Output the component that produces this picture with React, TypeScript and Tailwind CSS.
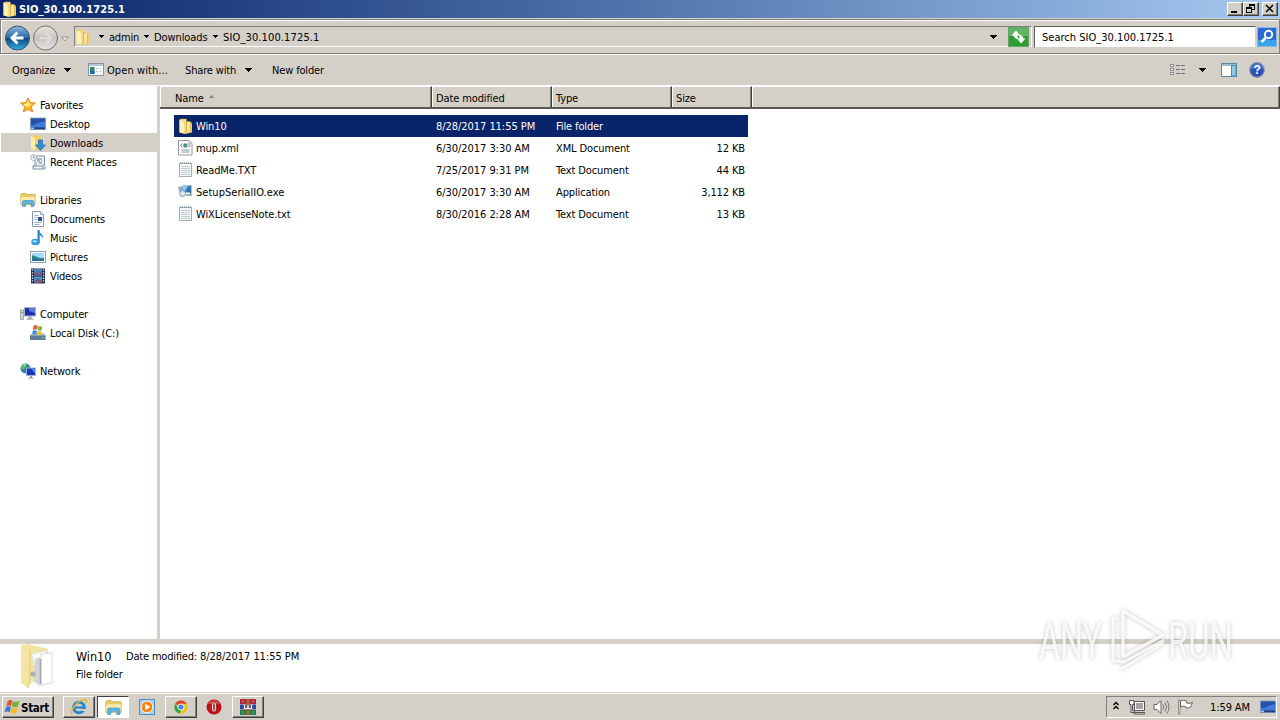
import { ReactNode } from "react";
import clsx from "clsx";

type IconProps = { children: ReactNode; size?: number; box?: string };

function Icon({ children, size = 16, box = "0 0 16 16" }: IconProps) {
  return (
    <svg width={size} height={size} viewBox={box} fill="none" className="shrink-0">
      {children}
    </svg>
  );
}

const FolderIcon = () => (
  <Icon>
    <path d="M1.500 1.500L5 .5l2 1V3l5.500.5 1.500 2v9l-7 1.500-5.500-1.500z" fill="#eccb62" />
    <path d="M1.500 1.500L6 3v12.500l-4.500-1.300z" fill="#fcf0b4" />
    <path d="M5.500 1L8.500.8V13l-2.500 2.500V3z" fill="#f3dc85" />
    <path d="M8.500 4.500l3.500-.3V14l-3.500 1z" fill="#f8e79e" />
    <path d="M8.500 3v11" stroke="#cfa53a" strokeWidth=".8" />
    <path d="M12.300 5v9.500" stroke="#d9b349" strokeWidth=".6" />
  </Icon>
);

const StarIcon = () => (
  <Icon>
    <path d="M8 .8l2.100 4.800 5.200.5-3.900 3.500 1.200 5.300L8 12.200l-4.600 2.700 1.200-5.300L.7 6.100l5.200-.5z" fill="#ffb92a" stroke="#e8821a" strokeWidth="1" />
    <path d="M8 3l1.400 3.600L12 7 6 10 3.400 7l3-.5z" fill="#ffe98a" />
  </Icon>
);

const DesktopIcon = () => (
  <Icon>
    <rect x=".5" y="2" width="15" height="11.500" fill="#2a57b4" stroke="#7c9ac8" strokeWidth=".8" />
    <path d="M1 3h14v3C10 5 6 9 1 9z" fill="#2850a8" />
    <path d="M1 9.500c5 0 7-4 14-4v6H1z" fill="#3f7bd9" />
    <rect x="1" y="11.500" width="14" height="1.700" fill="#26406f" />
    <rect x="1" y="11.500" width="3" height="1.700" fill="#8fc6f5" />
  </Icon>
);

const DownloadsIcon = () => (
  <Icon>
    <path d="M1 1l4-1 6 1v13l-6 1-4-1z" fill="#ecd06a" />
    <path d="M1 1l4 2v12l-4-1z" fill="#faedae" />
    <path d="M8.500 5h4v5h3l-5 5.500-5-5.500h3z" fill="#2f8ed8" stroke="#1a66ad" strokeWidth=".7" />
  </Icon>
);

const RecentIcon = () => (
  <Icon>
    <path d="M5 2h9.500v9H13v4H3v-3h2z" fill="#eef2f6" stroke="#7d93aa" />
    <path d="M3 12h10M13 15h2v-3" stroke="#7d93aa" />
    <path d="M7 5h5M7 7h3M9 9h3M6 10h1M11 7h1" stroke="#5e7890" />
    <circle cx="3.600" cy="3.600" r="3" fill="#f4f7fa" stroke="#8ba0b2" strokeWidth=".8" />
    <path d="M3.600 1.800v2h1.500" stroke="#476887" strokeWidth=".7" />
  </Icon>
);

const LibrariesIcon = ({ size }: { size?: number }) => (
  <Icon size={size}>
    <path d="M.8 2.500l1-1h4l1 1h8.400v10H.8z" fill="#e9cc62" stroke="#c9a43b" strokeWidth=".7" />
    <path d="M1.300 5h13.500v7H1.300z" fill="#f9ecae" />
    <path d="M2.500 14.500V10Q2.500 8.500 4 8.500h8.500q1.500 0 1.500 1.500v4.500h-3v-3H5.500v3z" fill="#5cb5e6" stroke="#3488c0" strokeWidth=".6" />
  </Icon>
);

const DocumentIcon = () => (
  <Icon>
    <path d="M2.500.5h8l3 3v12h-11z" fill="#fbfdff" stroke="#8199b8" />
    <path d="M10.500.5v3h3" fill="#d6e3f1" stroke="#8199b8" strokeWidth=".7" />
    <path d="M4.500 4.500h4M4.500 6.500h3M4.500 8.500h3M4.500 11.500h7M4.500 13.500h5" stroke="#9baec5" />
    <rect x="8" y="6" width="4" height="4" fill="#2c4f92" />
  </Icon>
);

const MusicIcon = () => (
  <Icon>
    <path d="M8 0c1 3 5.500 3.500 5.200 9-1-2.500-2.200-3.200-3.700-3.500z" fill="#2f93d4" />
    <path d="M7.500 0h2.200v13H7.500z" fill="#2b83c8" />
    <ellipse cx="5.500" cy="12" rx="4.200" ry="3.300" fill="#2e9ade" />
    <ellipse cx="4.800" cy="11.200" rx="2" ry="1.200" fill="#9bd8f7" />
  </Icon>
);

const PicturesIcon = () => (
  <Icon>
    <rect x=".5" y="2.500" width="15" height="11" fill="#fff" stroke="#8fa0ad" />
    <rect x="2" y="4" width="12" height="8" fill="#a5dcf5" />
    <path d="M2 6.500c4 0 5 3 12 2.500V12H2z" fill="#2e7f86" />
    <path d="M2 10c4 1 8 1 12 0v2H2z" fill="#276ca8" />
  </Icon>
);

const VideosIcon = () => (
  <Icon>
    <rect x="1" y=".5" width="14" height="15" fill="#223240" />
    <rect x="4" y="1" width="8" height="6.500" fill="#3f82c8" />
    <rect x="4" y="8.500" width="8" height="6.500" fill="#4f95d6" />
    <path d="M4 5l3-2 2 2 3-1v3.500H4zM4 13l4-3 4 3v2H4z" fill="#7b5a86" />
    <path d="M2.500 1.500v14M13.500 1.500v14" stroke="#dfe9f1" strokeWidth="1.300" strokeDasharray="1.300 1.400" />
  </Icon>
);

const ComputerIcon = () => (
  <Icon>
    <rect x=".5" y="4" width="3" height="9.500" fill="#cfd6cf" stroke="#83908a" strokeWidth=".7" />
    <rect x="1.200" y="6" width="1.500" height="1" fill="#49aa40" />
    <rect x="4.500" y="1.500" width="11" height="8.500" fill="#1d2fae" stroke="#a9b3cc" />
    <path d="M9 2h6v5L9 5z" fill="#5d79e0" />
    <path d="M8.500 10.500h3v2h2v1.200h-7v-1.200h2z" fill="#a0a9b5" />
  </Icon>
);

const DiskIcon = () => (
  <Icon>
    <path d="M0 10l2.500-2H13l2.500 2v5H0z" fill="#a9bccb" />
    <path d="M0 10.500h15.500V15H0z" fill="#5b7d99" />
    <rect x="11.500" y="12" width="3" height="1.300" fill="#63d65a" />
    <path d="M3.500 1Q5.500-.5 7.500.5L7 4.500Q5 4 3 5z" fill="#ea5a2c" />
    <path d="M8.200.9q2 1 4 0L11.700 5q-2 1-4 0z" fill="#76b83a" />
    <path d="M2.800 5.700q2-1 4 0L6.300 9.500q-2-1-4 0z" fill="#3986d8" />
    <path d="M7.500 5.800q2 1 4 0L11 9.800q-2 1-4 0z" fill="#f6bf2b" />
  </Icon>
);

const NetworkIcon = () => (
  <Icon>
    <circle cx="5.500" cy="5.500" r="5" fill="#2683b5" />
    <path d="M2 2.500Q5 0 7 1L5 5 3 7 1 5zM6 6l3-2 1 3-3 2z" fill="#5fc065" />
    <path d="M3 1.800L6 1 5 3z" fill="#bfeacb" />
    <rect x="6.500" y="5" width="9" height="7.500" fill="#1b36bd" stroke="#9fb3d8" />
    <path d="M11 5.500h4v5z" fill="#5784ed" />
    <path d="M10 13h2v1.500h1.500v1h-5v-1H10z" fill="#8f9cad" />
  </Icon>
);

const XmlIcon = () => (
  <Icon>
    <path d="M.5.500h10.500l3 3v11.500H.5z" fill="#fdfdfd" stroke="#9a9a9a" />
    <path d="M11 .5v3h3" stroke="#aaa" strokeWidth=".7" />
    <path d="M4.500 3.500L2.500 5.500l2 2M10 3.500l2 2-2 2" stroke="#55798c" />
    <circle cx="7.300" cy="5.500" r="1.800" fill="#3f9a7c" stroke="#3d6c82" strokeWidth=".7" />
    <path d="M3.500 10h8M3.500 12h8" stroke="#7d9aa9" />
  </Icon>
);

const TextIcon = () => (
  <Icon>
    <rect x="1.500" y="1.500" width="12" height="13" fill="#f4f7f8" stroke="#a3adb2" />
    <path d="M3 4.500h9M3 6.500h9M3 8.500h9M3 10.500h9M3 12.500h9" stroke="#bfcfd6" />
    <path d="M2 1h11" stroke="#8b979e" strokeWidth="1.600" strokeDasharray="1 1" />
  </Icon>
);

const SetupIcon = () => (
  <Icon>
    <path d="M0 3l5-1 1 6-4 2z" fill="#88abc8" />
    <rect x="5.500" y="1.500" width="8" height="7" fill="#3878bc" stroke="#a8bed0" />
    <path d="M6 2h4L7 7H6z" fill="#8bc4ee" />
    <circle cx="4.500" cy="9.500" r="3" fill="#dce8f1" stroke="#769fbe" />
    <path d="M8 10h6v2H8z" fill="#9db4c5" />
    <path d="M10 5l3 5" stroke="#305274" />
  </Icon>
);

const OpenWithIcon = () => (
  <Icon>
    <rect x=".5" y="1.500" width="15" height="12" fill="#f7fafc" stroke="#8496a5" />
    <path d="M1 3h14" stroke="#b6cad6" strokeWidth="2" />
    <rect x="2" y="5" width="4.500" height="7" fill="#35846e" />
    <path d="M2 9h4.500v3H2z" fill="#2369a8" />
    <path d="M8 6.500h2M11.500 6.500h2M8 9.500h2M11.500 9.500h2" stroke="#b6c3ce" />
  </Icon>
);

const FlagIcon = () => (
  <Icon box="0 0 18 18">
    <path d="M4 2.500Q7 0 9.500 2L8 8Q5.500 6.500 2.500 8.300z" fill="#e65324" />
    <path d="M10.300 2.500Q13.500 4 17.500 2L15.700 8.500q-3.500 1.500-7-.3z" fill="#73b338" />
    <path d="M2.300 9.200q3-2 5.500-.2L6.200 15Q3.500 13 .5 15z" fill="#3280cf" />
    <path d="M8.600 9.700q3.500 1.700 7 0l-1.700 6q-3.300 1.500-7-.2z" fill="#f5bd28" />
  </Icon>
);

const IeIcon = () => (
  <Icon size={18} box="0 0 18 18">
    <circle cx="9" cy="9.500" r="5.300" stroke="#2486d3" strokeWidth="3" />
    <path d="M5 9.500h9" stroke="#2486d3" strokeWidth="2.200" />
    <path d="M12 11h5v2h-5z" fill="#d4d0c8" />
    <path d="M2.500 16.500C-1 13 7 3 14 1.500c3-.6 3 2 1.500 4.500" stroke="#ecb428" strokeWidth="1.400" />
  </Icon>
);

const MediaIcon = () => (
  <Icon>
    <rect x=".5" y=".5" width="15" height="15" fill="#a9d1f3" stroke="#4d8fc7" />
    <circle cx="8" cy="8" r="5.800" fill="#f18712" stroke="#fff1d8" />
    <path d="M6.300 4.800L11.500 8l-5.200 3.200z" fill="#fff" />
  </Icon>
);

const ChromeIcon = () => (
  <Icon size={14}>
    <circle cx="8" cy="8" r="7.500" fill="#f2c21b" />
    <path d="M8 8L1.500 4.200A7.500 7.500 0 0114.500 4.200H8z" fill="#dd4232" />
    <path d="M1.500 4.200L5 10l3 1.500-1.500 4A7.500 7.500 0 011.500 4.200z" fill="#2da44e" />
    <circle cx="8" cy="8" r="3.500" fill="#4285e8" stroke="#fff" />
  </Icon>
);

const OperaIcon = () => (
  <Icon>
    <circle cx="8" cy="8" r="7.500" fill="#bf1218" />
    <path d="M2 5a7 7 0 0112 0z" fill="#dd4a48" />
    <ellipse cx="8" cy="8" rx="2.500" ry="5" fill="#f3eeec" stroke="#8b0a10" strokeWidth=".7" />
    <ellipse cx="8" cy="8" rx=".8" ry="4" fill="#9f1016" />
  </Icon>
);

const RarIcon = () => (
  <Icon size={16}>
    <path d="M0 0h16v5H0z" fill="#b4253b" />
    <path d="M0 5.500h16v5H0z" fill="#34479f" />
    <path d="M0 11h16v5H0z" fill="#258047" />
    <path d="M6.500 0h3v16h-3z" fill="#a8672e" />
    <path d="M4.500 5.500v4h7v-4M8 6v3" stroke="#fff" strokeWidth="1.200" />
    <path d="M3 1v3M13 1v3M3 12v3M13 12v3" stroke="#d79aa0" strokeWidth=".7" />
  </Icon>
);

const BigFolder = () => (
  <svg width="36" height="48" viewBox="0 0 36 48" fill="none">
    <path d="M2 2l6-1 20 5v5L16 36l-9 8z" fill="#f0e3a6" />
    <path d="M12 11l14-3 2 32-10 3z" fill="#fafafa" stroke="#e4e4e4" />
    <path d="M15 16l5-2v28l-6-3z" fill="#d2d4d5" />
    <path d="M21 11l11-1v30l-11 2z" fill="#fff" stroke="#dadada" />
    <path d="M20.500 16v25" stroke="#9fa5aa" strokeWidth="1.500" />
    <path d="M1 1l9 6v29L8 45l-7-5z" fill="#f6e5a1" />
    <path d="M10 7v29l-2 9" stroke="#dfc878" />
    <circle cx="13" cy="31" r="2.500" fill="#a8adb0" />
  </svg>
);

const Caret = ({ className }: { className?: string }) => (
  <svg width="7" height="4" viewBox="0 0 7 4" shapeRendering="crispEdges" className={clsx("shrink-0", className)}>
    <path d="M0 0h7v1H6v1H5v1H4v1H3V3H2V2H1V1H0z" fill="#000" />
  </svg>
);

const SmallCaret = () => (
  <svg width="5" height="3" viewBox="0 0 5 3" shapeRendering="crispEdges" className="shrink-0">
    <path d="M0 0h5v1H4v1H3v1H2V2H1V1H0z" fill="#000" />
  </svg>
);

const RAISED = "border border-t-white border-l-white border-r-[#404040] border-b-[#404040] shadow-[inset_-1px_-1px_0_#808080]";

function TitleBar() {
  return (
    <div className="flex h-[18px] items-center bg-linear-to-r from-[#0a246a] to-[#a6caf0] pr-[2px] pl-[2px] text-white">
      <FolderIcon />
      <span className="ml-px pt-[2px] font-bold tracking-[0.1px]">SIO_30.100.1725.1</span>
      <div className="ml-auto flex">
        <button className={clsx("h-[14px] w-4 bg-[#d4d0c8]", RAISED)}>
          <svg width="14" height="12" viewBox="0 0 14 12"><path d="M3 8h6v2H3z" fill="#000" /></svg>
        </button>
        <button className={clsx("h-[14px] w-4 bg-[#d4d0c8]", RAISED)}>
          <svg width="14" height="12" viewBox="0 0 14 12" fill="none" stroke="#000" shapeRendering="crispEdges">
            <path d="M5.500 4V1.500h5v5H8M5 2h6M2.500 4.500h5v5h-5zM2 5h6" />
          </svg>
        </button>
        <button className={clsx("ml-[3px] h-[14px] w-4 bg-[#d4d0c8]", RAISED)}>
          <svg width="14" height="12" viewBox="0 0 14 12" stroke="#000" strokeWidth="1.500"><path d="M3 2l7 7M10 2l-7 7" /></svg>
        </button>
      </div>
    </div>
  );
}

function NavButtons() {
  return (
    <svg width="70" height="28" viewBox="0 0 70 28" fill="none" className="shrink-0">
      <defs>
        <linearGradient id="back" x1="0" y1="0" x2="0" y2="1">
          <stop offset="0" stopColor="#8db9dc" />
          <stop offset=".48" stopColor="#2b6ca8" />
          <stop offset=".52" stopColor="#0d4580" />
          <stop offset="1" stopColor="#2cb4e8" />
        </linearGradient>
        <linearGradient id="fwd" x1="0" y1="0" x2="0" y2="1">
          <stop offset="0" stopColor="#e9e8e6" />
          <stop offset=".5" stopColor="#c4c2bf" />
          <stop offset="1" stopColor="#e8e7e5" />
        </linearGradient>
      </defs>
      <circle cx="15.500" cy="15" r="12" fill="url(#back)" stroke="#38536e" />
      <path d="M21.500 15H11M15.500 9.500L10 15l5.500 5.500" stroke="#fff" strokeWidth="3" />
      <circle cx="43.500" cy="15" r="12" fill="url(#fwd)" stroke="#77736e" />
      <path d="M38 15h10M44 10l5 5-5 5" stroke="#dddbd8" strokeWidth="2.500" />
      <path d="M59.500 14h7L63 18z" fill="#e8e6e3" stroke="#8a867f" strokeWidth=".8" />
    </svg>
  );
}

function AddressBar() {
  return (
    <div className="mt-px flex h-[35px] items-center border border-[#808080] pl-[1px] shadow-[inset_1px_1px_0_#fff,0_1px_0_#fff]">
      <NavButtons />
      <div className="ml-[2px] flex h-[21px] w-[958px] shrink-0 items-center border border-t-[#808080] border-r-white border-b-white border-l-[#808080]">
        <FolderIcon />
        <span className="w-[8px]" />
        <SmallCaret />
        <span className="ml-[5px] w-[35px] pt-[2px] tracking-[-0.2px]">admin</span>
        <SmallCaret />
        <span className="ml-[5px] w-[59px] pt-[2px] tracking-[-0.1px]">Downloads</span>
        <SmallCaret />
        <span className="ml-[5px] pt-[2px] tracking-[0.13px]">SIO_30.100.1725.1</span>
        <Caret className="mr-[11px] ml-auto" />
        <svg width="21" height="20" viewBox="0 0 21 20" className="mr-[2px]" fill="none">
          <rect x=".5" y=".5" width="20" height="19" fill="#2f9f35" stroke="#67a568" />
          <path d="M1 1h19v8H1z" fill="#5fb561" />
          <path d="M3.500 8.500L8 3.500l4 5H9.500q-.5 3 2 4-5-.2-6-4zM17.500 11.500L13 16.500l-4-5h2.500q.5-3-2-4 5 .2 6 4z" fill="#fff" />
        </svg>
      </div>
      <div className="ml-[2px] flex h-[22px] w-[222px] shrink-0 items-center border border-t-[#606060] border-r-[#d4d0c8] border-b-[#d4d0c8] border-l-[#606060] bg-white pt-[3px] pl-[7px] tracking-[0.02px]">
        Search SIO_30.100.1725.1
      </div>
      <svg width="20" height="20" viewBox="0 0 20 20" className="mt-px ml-px shrink-0" fill="none">
        <rect x=".5" y=".5" width="19" height="19" fill="#2b6bd6" stroke="#8bb4ea" />
        <path d="M1 13h18v6H1z" fill="#36a4e8" />
        <circle cx="11.500" cy="7.500" r="3.700" stroke="#fff" strokeWidth="1.900" />
        <path d="M8.500 11l-4 4" stroke="#fff" strokeWidth="2.500" />
      </svg>
    </div>
  );
}

function Toolbar() {
  return (
    <div className="flex h-[31px] items-center pt-px pr-[15px] pl-[12px] tracking-[-0.15px]">
      <span className="w-[52px] pt-[2px]">Organize</span>
      <Caret />
      <span className="ml-[17px]"><OpenWithIcon /></span>
      <span className="ml-[3px] w-[78px] pt-[2px] tracking-[0.08px]">Open with...</span>
      <span className="w-[60px] pt-[2px]">Share with</span>
      <Caret />
      <span className="ml-[20px] pt-[2px]">New folder</span>
      <div className="ml-auto flex items-center">
        <svg width="16" height="12" viewBox="0 0 16 12" fill="none" shapeRendering="crispEdges">
          <path d="M.5.500h3v2h-3zM.5 4.500h3v2h-3zM.5 8.500h3v2h-3z" fill="#fff" stroke="#8b8e93" />
          <path d="M6 1.500h4M11 1.500h4M6 5.500h4M11 5.500h4M6 9.500h4M11 9.500h4" stroke="#6d7480" />
        </svg>
        <Caret className="ml-[13px]" />
        <svg width="16" height="14" viewBox="0 0 16 14" className="ml-[15px]" fill="none">
          <rect x=".5" y=".5" width="15" height="13" fill="#fff" stroke="#5f87a0" />
          <path d="M1 2h14" stroke="#9fbdd0" strokeWidth="2" />
          <rect x="10.500" y="2.500" width="4.500" height="10.500" fill="#8acce6" stroke="#4a8aad" />
        </svg>
        <svg width="16" height="16" viewBox="0 0 16 16" className="ml-[12px]">
          <circle cx="8" cy="8" r="7.300" fill="#2850b8" stroke="#8a94a8" strokeWidth="1.200" />
          <path d="M2 7a6 6 0 0112 0z" fill="#4a70cc" />
          <text x="8" y="12.300" textAnchor="middle" fontSize="12" fontWeight="bold" fill="#fff" fontFamily="Liberation Sans, sans-serif">?</text>
        </svg>
      </div>
    </div>
  );
}

type NavItem = { label: string; icon: ReactNode; active?: boolean };

const GROUPS: (NavItem & { items: NavItem[] })[] = [
  {
    label: "Favorites",
    icon: <StarIcon />,
    items: [
      { label: "Desktop", icon: <DesktopIcon /> },
      { label: "Downloads", icon: <DownloadsIcon />, active: true },
      { label: "Recent Places", icon: <RecentIcon /> },
    ],
  },
  {
    label: "Libraries",
    icon: <LibrariesIcon />,
    items: [
      { label: "Documents", icon: <DocumentIcon /> },
      { label: "Music", icon: <MusicIcon /> },
      { label: "Pictures", icon: <PicturesIcon /> },
      { label: "Videos", icon: <VideosIcon /> },
    ],
  },
  { label: "Computer", icon: <ComputerIcon />, items: [{ label: "Local Disk (C:)", icon: <DiskIcon /> }] },
  { label: "Network", icon: <NetworkIcon />, items: [] },
];

function Sidebar() {
  return (
    <nav className="flex w-[157px] shrink-0 flex-col gap-[19px] bg-white pt-[9px] tracking-[-0.15px]">
      {GROUPS.map((g) => (
        <div key={g.label}>
          <div className="flex h-[19px] items-center gap-1 pl-5">
            {g.icon}
            <span className="pt-[3px]">{g.label}</span>
          </div>
          {g.items.map((it) => (
            <div key={it.label} className={clsx("ml-px flex h-[19px] items-center gap-1 pl-[29px]", it.active && "bg-[#d4d0c8]")}>
              {it.icon}
              <span className="pt-[3px]">{it.label}</span>
            </div>
          ))}
        </div>
      ))}
    </nav>
  );
}

const FILES = [
  { name: "Win10", date: "8/28/2017 11:55 PM", type: "File folder", size: "", icon: <FolderIcon /> },
  { name: "mup.xml", date: "6/30/2017 3:30 AM", type: "XML Document", size: "12 KB", icon: <XmlIcon /> },
  { name: "ReadMe.TXT", date: "7/25/2017 9:31 PM", type: "Text Document", size: "44 KB", icon: <TextIcon /> },
  { name: "SetupSerialIO.exe", date: "6/30/2017 3:30 AM", type: "Application", size: "3,112 KB", icon: <SetupIcon /> },
  { name: "WiXLicenseNote.txt", date: "8/30/2016 2:28 AM", type: "Text Document", size: "13 KB", icon: <TextIcon /> },
];

const COL = "flex items-center border-t border-l border-t-white border-l-white border-r border-r-[#404040] pt-[4px] shadow-[inset_-1px_0_0_#808080]";

function FileList() {
  return (
    <main className="flex min-w-0 flex-1 flex-col bg-white tracking-[-0.12px]">
      <div className="flex h-[23px] border-b-2 border-b-[#5a5854] bg-[#d4d0c8]">
        <div className={clsx("w-[272px] pl-[14px]", COL)}>
          Name
          <svg width="5" height="3" viewBox="0 0 5 3" className="mb-[5px] ml-[5px]"><path d="M2.500 0L5 3H0z" fill="#808080" /></svg>
        </div>
        <div className={clsx("w-[120px] pl-[3px]", COL)}>Date modified</div>
        <div className={clsx("w-[120px] pl-[3px]", COL)}>Type</div>
        <div className={clsx("w-[80px] pl-[3px]", COL)}>Size</div>
        <div className={clsx("flex-1", COL)} />
      </div>
      <div className="mt-[6px] ml-[14px] w-[574px]">
        {FILES.map((f, i) => (
          <div key={f.name} className={clsx("flex h-[22px] items-center pr-[3px] pl-1", i === 0 && "bg-[#0a246a] text-white")}>
            {f.icon}
            <span className={clsx("ml-[2px] w-[240px] pt-[2px]", f.name === "SetupSerialIO.exe" && "tracking-[0.04px]")}>{f.name}</span>
            <span className="w-[120px] pt-[2px] tracking-[-0.05px]">{f.date}</span>
            <span className="w-[115px] pt-[2px]">{f.type}</span>
            <span className="flex-1 pt-[2px] text-right">{f.size}</span>
          </div>
        ))}
      </div>
    </main>
  );
}

function DetailsPane() {
  return (
    <div className="flex h-[48px] bg-white pl-[20px]">
      <div className="-mt-px w-[56px]"><BigFolder /></div>
      <div className="pt-px">
        <div className="flex h-[22px] items-center pt-[2px]">
          <span className="w-[50px] text-[12.500px]">Win10</span>
          <span className="w-[74px] tracking-[-0.18px]">Date modified:</span>
          <span className="tracking-[-0.05px]">8/28/2017 11:55 PM</span>
        </div>
        <div className="flex h-[15px] items-center pt-px tracking-[-0.15px]">File folder</div>
      </div>
    </div>
  );
}

function Taskbar() {
  const btn = clsx("flex h-[22px] w-8 items-center justify-center", RAISED);
  return (
    <div className="flex h-[27px] items-center border-t border-t-white pr-[3px] pl-[2px]">
      <button className={clsx("flex h-[22px] w-[52px] items-center pl-px text-[11.500px] font-bold tracking-[-0.3px]", RAISED)}>
        <FlagIcon />
        <span className="pl-px pt-[2px]">Start</span>
      </button>
      <div className={clsx("ml-[9px]", btn)}><IeIcon /></div>
      <div className="ml-[2px] flex h-[22px] w-8 items-center justify-center border border-t-[#404040] border-r-white border-b-white border-l-[#404040] bg-white">
        <LibrariesIcon size={17} />
      </div>
      <div className="ml-[10px]"><MediaIcon /></div>
      <div className={clsx("ml-[10px]", btn)}><ChromeIcon /></div>
      <div className="ml-[9px]"><OperaIcon /></div>
      <div className={clsx("ml-[10px]", btn)}><RarIcon /></div>
      <div className="ml-auto flex h-[22px] w-[171px] items-center border border-t-[#808080] border-r-white border-b-white border-l-[#808080] pl-[6px]">
        <svg width="6" height="9" viewBox="0 0 6 9" fill="none" stroke="#000" strokeWidth="1.400" className="-mt-[3px]"><path d="M.5 4L3 1.500 5.500 4M.5 8L3 5.500 5.500 8" /></svg>
        <svg width="17" height="16" viewBox="0 0 17 16" fill="none" className="ml-[10px]">
          <path d="M5.500 2.500h10v9h-10z" fill="#fff" stroke="#555" />
          <path d="M7 4h7v6H7z" fill="#a3a3a3" />
          <path d="M5.500 13.500h10v1.500h-10z" fill="#fff" stroke="#555" />
          <path d="M.5 1.500h4.500v4H3.500v6.500h2v1.500h-3.500V5.500H.5z" fill="#fff" stroke="#555" />
        </svg>
        <svg width="17" height="16" viewBox="0 0 17 16" fill="none" className="ml-[7px]">
          <path d="M1 5.500h3l4-4v13l-4-4H1z" fill="#fff" stroke="#666" />
          <path d="M10 5.500q1.500 2.500 0 5M12 3.500q3 4.500 0 9M14 1.500q4 6.500 0 13" stroke="#777" />
        </svg>
        <svg width="17" height="16" viewBox="0 0 17 16" fill="none" className="ml-[7px]">
          <path d="M3.500 2q3-1.500 6 0v2q3 1 6-.5l-2 5q-2.500 1-5 0V7.500Q6 6.500 3.500 8z" fill="#fff" stroke="#666" />
          <path d="M1.500 1v14H3V1z" fill="#fff" stroke="#666" strokeWidth=".7" />
        </svg>
        <span className="ml-[16px] w-[50px] pt-[2px] tracking-[-0.1px]">1:59 AM</span>
        <DesktopIcon />
      </div>
    </div>
  );
}

// Translucent logo drawn over the bottom right corner of the window
function Watermark() {
  return (
    <svg
      width="240"
      height="80"
      viewBox="0 0 240 80"
      fill="none"
      className="pointer-events-none absolute top-[600px] left-[1030px] drop-shadow-[0_0_2px_#00000048]"
    >
      <g fill="#fff" fillOpacity=".8" fontFamily="Roboto, sans-serif" fontSize="51">
        <text x="9" y="59" textLength="63" lengthAdjust="spacingAndGlyphs">ANY</text>
        <text x="138" y="59" textLength="65" lengthAdjust="spacingAndGlyphs">RUN</text>
      </g>
      <g stroke="#fff" strokeOpacity=".8" strokeWidth="3.500" strokeLinejoin="round">
        <path d="M93 57V11l40 24-40 22" />
        <path d="M88 18h-5v43h5" strokeWidth="3" />
        <path d="M88 61l6 1 40-22M91 69l43-26" strokeWidth="3" />
      </g>
    </svg>
  );
}

export default function App() {
  return (
    <div className="relative flex h-[720px] w-[1280px] flex-col overflow-hidden bg-[#d4d0c8] font-['DejaVu_Sans_Condensed','DejaVu_Sans',sans-serif] text-[11px] leading-[14px] text-black">
      <TitleBar />
      <AddressBar />
      <Toolbar />
      <div className="flex h-[554px] border-t border-t-white">
        <Sidebar />
        <div className="w-[3px]" />
        <FileList />
      </div>
      <div className="h-[5px]" />
      <DetailsPane />
      <div className="h-px" />
      <Taskbar />
      <Watermark />
    </div>
  );
}
